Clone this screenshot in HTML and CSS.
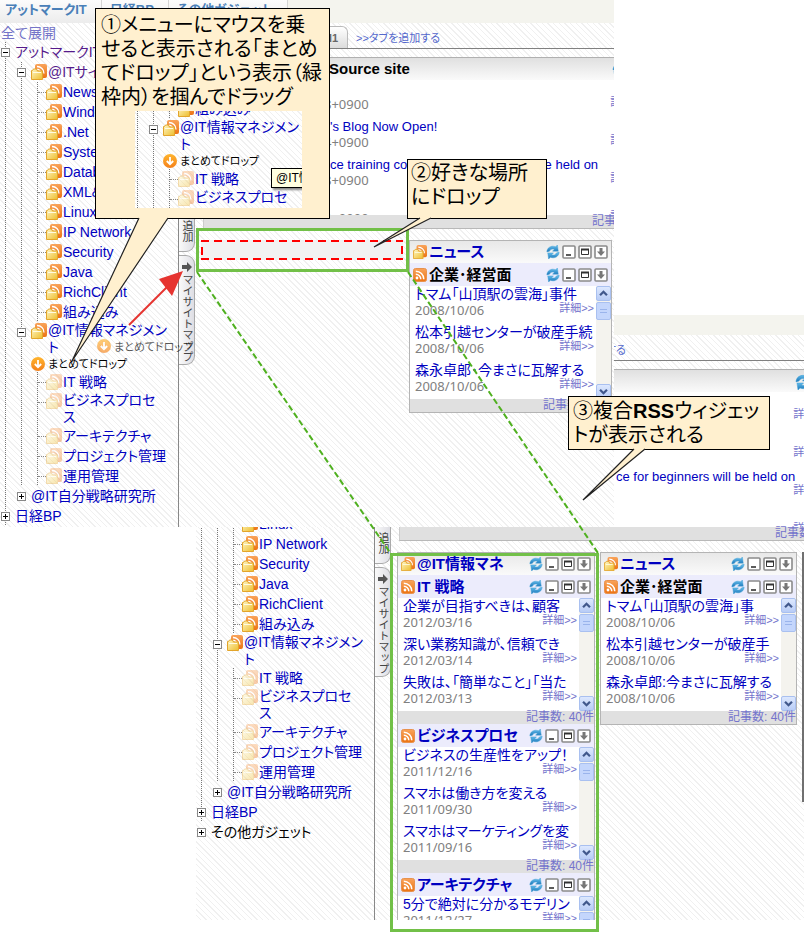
FILE: index.html
```html
<!DOCTYPE html>
<html lang="ja">
<head>
<meta charset="utf-8">
<meta name="viewport" content="width=device-width, initial-scale=1">
<title>まとめてドロップ</title>
<link rel="stylesheet" href="styles.css">
</head>
<body>
<svg class="defs" aria-hidden="true">
  <defs>
    <linearGradient id="orange" x1="0" y1="0" x2="0" y2="1"><stop offset="0" stop-color="#f9a35a"/><stop offset="1" stop-color="#ec7414"/></linearGradient>
    <linearGradient id="gold" x1="0" y1="0" x2="1" y2="1"><stop offset="0" stop-color="#fff6c4"/><stop offset="1" stop-color="#edbd2c"/></linearGradient>
    <linearGradient id="sun" x1="0" y1="0" x2="0" y2="1"><stop offset="0" stop-color="#ffb52e"/><stop offset="1" stop-color="#f4801a"/></linearGradient>
    <linearGradient id="blue" x1="0" y1="0" x2="0" y2="1"><stop offset="0" stop-color="#6cc4f0"/><stop offset="1" stop-color="#1874b8"/></linearGradient>
  </defs>
  <symbol id="folder" viewBox="0 0 16 16">
    <rect x="4" y="0" width="12" height="14" rx="2" fill="url(#orange)"/>
    <path d="M6 2.500c4 0 7 3 7 7M6 5.500c2.500 0 4 2 4 4" fill="none" stroke="#fff" stroke-width="1.300"/>
    <path d="M0.500 6.500h1l1-1.500h3l1 2h5v8.500h-11z" fill="url(#gold)" stroke="#e3a52b"/>
    <path d="M2 8.500h8" stroke="#fffbe2"/>
  </symbol>
  <symbol id="rss" viewBox="0 0 14 14">
    <rect x="0.500" y="0.500" width="13" height="13" rx="2" fill="url(#orange)" stroke="#e8924e"/>
    <circle cx="4" cy="10" r="1.400" fill="#fff"/>
    <path d="M2.800 6.200a5 5 0 0 1 5 5M2.800 3.200a8 8 0 0 1 8 8" fill="none" stroke="#fff" stroke-width="1.500"/>
  </symbol>
  <symbol id="refresh" viewBox="0 0 16 16">
    <path d="M1 8C1 3 6 0 11 2l2-2 1 7H7.500l2-2C7 4 5 5 4 7z" fill="url(#blue)" stroke="#3f9ed4" stroke-width=".5"/>
    <path d="M15 8c0 5-5 8-10 6l-2 2-1-7h6.500l-2 2c2.500 1 4.500 0 5.500-2z" fill="url(#blue)" stroke="#3f9ed4" stroke-width=".5"/>
  </symbol>
  <symbol id="min" viewBox="0 0 14 14"><rect x="1" y="1" width="12" height="12" rx="1" fill="#fff" stroke="#8a8a8a" stroke-width="1.600"/><path d="M4 10h5" stroke="#333" stroke-width="1.600"/></symbol>
  <symbol id="max" viewBox="0 0 14 14"><rect x="1" y="1" width="12" height="12" rx="1" fill="#fff" stroke="#8a8a8a" stroke-width="1.600"/><path d="M3.500 4.500v5h7v-5z" fill="none" stroke="#333"/><path d="M3 4.500h8" stroke="#333" stroke-width="2"/></symbol>
  <symbol id="down" viewBox="0 0 14 14"><rect x="1" y="1" width="12" height="12" rx="1" fill="#fff" stroke="#8a8a8a" stroke-width="1.600"/><path d="M5.500 3h3v3.500h2.500L7 11 3 6.500h2.500z" fill="#777"/></symbol>
  <symbol id="drop" viewBox="0 0 14 14"><circle cx="7" cy="7" r="7" fill="url(#sun)"/><path d="M7 3v7M3.800 7L7 10.200 10.200 7" fill="none" stroke="#fff" stroke-width="1.800"/></symbol>
  <symbol id="up" viewBox="0 0 15 15"><path d="M3.500 9.500l4-4 4 4" fill="none" stroke="#41588c" stroke-width="2.600"/></symbol>
  <symbol id="dn" viewBox="0 0 15 15"><path d="M3.500 5.500l4 4 4-4" fill="none" stroke="#41588c" stroke-width="2.600"/></symbol>
  <symbol id="arrow" viewBox="0 0 10 10"><path d="M0 3h5V0l5 5-5 5V7H0z" fill="#555"/></symbol>
  <symbol id="plus" viewBox="0 0 9 9"><rect x=".5" y=".5" width="8" height="8" fill="#fff" stroke="#888"/><path d="M2 4.500h5M4.500 2v5" stroke="#000"/></symbol>
  <symbol id="minus" viewBox="0 0 9 9"><rect x=".5" y=".5" width="8" height="8" fill="#fff" stroke="#888"/><path d="M2 4.500h5" stroke="#000"/></symbol>
</svg>

<main class="canvas">

  <section class="screen screen-after">
    <header class="topbar"></header>
    <div class="body">
      <nav class="side">
        <ul class="tree">
          <li class="l2"><svg><use href="#folder"/></svg><a href="#">Linux</a></li>
          <li class="l2"><svg><use href="#folder"/></svg><a href="#">IP Network</a></li>
          <li class="l2"><svg><use href="#folder"/></svg><a href="#">Security</a></li>
          <li class="l2"><svg><use href="#folder"/></svg><a href="#">Java</a></li>
          <li class="l2"><svg><use href="#folder"/></svg><a href="#">RichClient</a></li>
          <li class="l2 end"><svg><use href="#folder"/></svg><a href="#">組み込み</a></li>
          <li class="l1 two"><svg class="tog"><use href="#minus"/></svg><svg><use href="#folder"/></svg><a href="#">@IT情報マネジメン<br>ト</a></li>
          <li class="l2 dim"><svg><use href="#folder"/></svg><a href="#">IT 戦略</a></li>
          <li class="l2 dim two"><svg><use href="#folder"/></svg><a href="#">ビジネスプロセ<br>ス</a></li>
          <li class="l2 dim"><svg><use href="#folder"/></svg><a href="#">アーキテクチャ</a></li>
          <li class="l2 dim"><svg><use href="#folder"/></svg><a href="#">プロジェクト管理</a></li>
          <li class="l2 dim end"><svg><use href="#folder"/></svg><a href="#">運用管理</a></li>
          <li class="l1 end"><svg class="tog"><use href="#plus"/></svg><a href="#">@IT自分戦略研究所</a></li>
          <li class="l0"><svg class="tog"><use href="#plus"/></svg><a href="#">日経BP</a></li>
          <li class="l0 end"><svg class="tog"><use href="#plus"/></svg><span>その他ガジェット</span></li>
        </ul>
      </nav>
      <div class="rail"><button class="add">追加</button><button><svg><use href="#arrow"/></svg>マイサイトマップ</button></div>
      <div class="work">
        <div class="tabs"><a class="addtab" href="#">する</a></div>
        <article class="wide">
          <header><svg><use href="#refresh"/></svg></header>
          <div class="feed">
            <div class="item"><p></p><a href="#">詳細&gt;&gt;</a></div>
            <div class="item"><p></p><a href="#">詳細&gt;&gt;</a></div>
            <div class="item"><h4><a href="#">ce for beginners will be held on</a></h4><p></p><a href="#">詳細&gt;&gt;</a></div>
            <div class="item"><p></p><a href="#">詳細&gt;&gt;</a></div>
          </div>
          <footer>記事数: 40件</footer>
        </article>
        <div class="cols">
          <article class="widget">
            <header><svg><use href="#folder"/></svg><h3><a href="#">@IT情報マネ</a></h3><span class="ctl"><button><svg><use href="#refresh"/></svg></button><button><svg><use href="#min"/></svg></button><button><svg><use href="#max"/></svg></button><button><svg><use href="#down"/></svg></button></span></header>
            <header class="sub"><svg><use href="#rss"/></svg><h3><a href="#">IT 戦略</a></h3><span class="ctl"><button><svg><use href="#refresh"/></svg></button><button><svg><use href="#min"/></svg></button><button><svg><use href="#max"/></svg></button><button><svg><use href="#down"/></svg></button></span></header>
            <div class="view"><div class="feed">
              <div class="item"><h4><a href="#">企業が目指すべきは、顧客</a></h4><p>2012/03/16</p><a href="#">詳細&gt;&gt;</a></div>
              <div class="item"><h4><a href="#">深い業務知識が、信頼でき</a></h4><p>2012/03/14</p><a href="#">詳細&gt;&gt;</a></div>
              <div class="item"><h4><a href="#">失敗は、「簡単なこと」「当た</a></h4><p>2012/03/13</p><a href="#">詳細&gt;&gt;</a></div>
            </div><div class="bar"><button><svg><use href="#up"/></svg></button><i></i><button><svg><use href="#dn"/></svg></button></div></div>
            <footer>記事数: 40件</footer>
            <header class="sub"><svg><use href="#rss"/></svg><h3><a href="#">ビジネスプロセ</a></h3><span class="ctl"><button><svg><use href="#refresh"/></svg></button><button><svg><use href="#min"/></svg></button><button><svg><use href="#max"/></svg></button><button><svg><use href="#down"/></svg></button></span></header>
            <div class="view"><div class="feed">
              <div class="item"><h4><a href="#">ビジネスの生産性をアップ！</a></h4><p>2011/12/16</p><a href="#">詳細&gt;&gt;</a></div>
              <div class="item"><h4><a href="#">スマホは働き方を変える</a></h4><p>2011/09/30</p><a href="#">詳細&gt;&gt;</a></div>
              <div class="item"><h4><a href="#">スマホはマーケティングを変</a></h4><p>2011/09/16</p><a href="#">詳細&gt;&gt;</a></div>
            </div><div class="bar"><button><svg><use href="#up"/></svg></button><i></i><button><svg><use href="#dn"/></svg></button></div></div>
            <footer>記事数: 40件</footer>
            <header class="sub"><svg><use href="#rss"/></svg><h3><a href="#">アーキテクチャ</a></h3><span class="ctl"><button><svg><use href="#refresh"/></svg></button><button><svg><use href="#min"/></svg></button><button><svg><use href="#max"/></svg></button><button><svg><use href="#down"/></svg></button></span></header>
            <div class="view"><div class="feed">
              <div class="item"><h4><a href="#">5分で絶対に分かるモデリン</a></h4><p>2011/12/27</p><a href="#">詳細&gt;&gt;</a></div>
            </div><div class="bar"><button><svg><use href="#up"/></svg></button><i></i></div></div>
          </article>
          <article class="widget">
            <header><svg><use href="#folder"/></svg><h3><a href="#">ニュース</a></h3><span class="ctl"><button><svg><use href="#refresh"/></svg></button><button><svg><use href="#min"/></svg></button><button><svg><use href="#max"/></svg></button><button><svg><use href="#down"/></svg></button></span></header>
            <header class="sub"><svg><use href="#rss"/></svg><h3>企業･経営面</h3><span class="ctl"><button><svg><use href="#refresh"/></svg></button><button><svg><use href="#min"/></svg></button><button><svg><use href="#max"/></svg></button><button><svg><use href="#down"/></svg></button></span></header>
            <div class="view"><div class="feed">
              <div class="item"><h4><a href="#">トマム「山頂駅の雲海」事</a></h4><p>2008/10/06</p><a href="#">詳細&gt;&gt;</a></div>
              <div class="item"><h4><a href="#">松本引越センターが破産手</a></h4><p>2008/10/06</p><a href="#">詳細&gt;&gt;</a></div>
              <div class="item"><h4><a href="#">森永卓郎:今まさに瓦解する</a></h4><p>2008/10/06</p><a href="#">詳細&gt;&gt;</a></div>
            </div><div class="bar"><button><svg><use href="#up"/></svg></button><i></i><button><svg><use href="#dn"/></svg></button></div></div>
            <footer>記事数: 40件</footer>
          </article>
          <div class="edge"></div>
        </div>
      </div>
    </div>
  </section>

  <section class="screen screen-before">
    <header class="topbar"><a href="#">アットマークIT</a><a href="#">日経BP</a><a href="#">その他ガジェット</a></header>
    <div class="body">
      <nav class="side">
        <a class="expand" href="#">全て展開</a>
        <ul class="tree">
          <li class="l0"><svg class="tog"><use href="#minus"/></svg><a class="seen" href="#">アットマークIT</a></li>
          <li class="l1"><svg class="tog"><use href="#minus"/></svg><svg><use href="#folder"/></svg><a class="seen" href="#">@ITサイト</a></li>
          <li class="l2"><svg><use href="#folder"/></svg><a href="#">News</a></li>
          <li class="l2"><svg><use href="#folder"/></svg><a href="#">Windows</a></li>
          <li class="l2"><svg><use href="#folder"/></svg><a href="#">.Net</a></li>
          <li class="l2"><svg><use href="#folder"/></svg><a href="#">System</a></li>
          <li class="l2"><svg><use href="#folder"/></svg><a href="#">Database</a></li>
          <li class="l2"><svg><use href="#folder"/></svg><a href="#">XML&amp;</a></li>
          <li class="l2"><svg><use href="#folder"/></svg><a href="#">Linux</a></li>
          <li class="l2"><svg><use href="#folder"/></svg><a href="#">IP Network</a></li>
          <li class="l2"><svg><use href="#folder"/></svg><a href="#">Security</a></li>
          <li class="l2"><svg><use href="#folder"/></svg><a href="#">Java</a></li>
          <li class="l2"><svg><use href="#folder"/></svg><a href="#">RichClient</a></li>
          <li class="l2 end"><svg><use href="#folder"/></svg><a href="#">組み込み</a></li>
          <li class="l1 two"><svg class="tog"><use href="#minus"/></svg><svg><use href="#folder"/></svg><a href="#">@IT情報マネジメン<br>ト</a></li>
          <li class="l1 grab"><svg><use href="#drop"/></svg>まとめてドロップ</li>
          <li class="l2 dim"><svg><use href="#folder"/></svg><a href="#">IT 戦略</a></li>
          <li class="l2 dim two"><svg><use href="#folder"/></svg><a href="#">ビジネスプロセ<br>ス</a></li>
          <li class="l2 dim"><svg><use href="#folder"/></svg><a href="#">アーキテクチャ</a></li>
          <li class="l2 dim"><svg><use href="#folder"/></svg><a href="#">プロジェクト管理</a></li>
          <li class="l2 dim end"><svg><use href="#folder"/></svg><a href="#">運用管理</a></li>
          <li class="l1 end"><svg class="tog"><use href="#plus"/></svg><a href="#">@IT自分戦略研究所</a></li>
          <li class="l0"><svg class="tog"><use href="#plus"/></svg><a href="#">日経BP</a></li>
        </ul>
      </nav>
      <div class="rail"><button class="add">追加</button><button><svg><use href="#arrow"/></svg>マイサイトマップ</button></div>
      <div class="work">
        <div class="tabs"><button class="tab">d1</button><a class="addtab" href="#">&gt;&gt;タブを追加する</a></div>
        <article class="wide">
          <header><h3>Source site</h3><svg><use href="#refresh"/></svg></header>
          <div class="feed">
            <div class="item"><p>8+0900</p><a href="#">詳細&gt;&gt;</a></div>
            <div class="item"><h4><a href="#">'s Blog Now Open!</a></h4><p>4+0900</p><a href="#">詳細&gt;&gt;</a></div>
            <div class="item"><h4><a href="#">ce training course for beginners will be held on</a></h4><p>8+0900</p><a href="#">詳細&gt;&gt;</a></div>
            <div class="item"><p>8+0900</p><a href="#">詳細&gt;&gt;</a></div>
          </div>
          <footer>記事数: 40件</footer>
        </article>
        <div class="cols">
          <svg class="slot"><rect width="100%" height="100%"/></svg>
          <article class="widget">
            <header><svg><use href="#folder"/></svg><h3><a href="#">ニュース</a></h3><span class="ctl"><button><svg><use href="#refresh"/></svg></button><button><svg><use href="#min"/></svg></button><button><svg><use href="#max"/></svg></button><button><svg><use href="#down"/></svg></button></span></header>
            <header class="sub"><svg><use href="#rss"/></svg><h3>企業･経営面</h3><span class="ctl"><button><svg><use href="#refresh"/></svg></button><button><svg><use href="#min"/></svg></button><button><svg><use href="#max"/></svg></button><button><svg><use href="#down"/></svg></button></span></header>
            <div class="view"><div class="feed">
              <div class="item"><h4><a href="#">トマム「山頂駅の雲海」事件</a></h4><p>2008/10/06</p><a href="#">詳細&gt;&gt;</a></div>
              <div class="item"><h4><a href="#">松本引越センターが破産手続</a></h4><p>2008/10/06</p><a href="#">詳細&gt;&gt;</a></div>
              <div class="item"><h4><a href="#">森永卓郎･今まさに瓦解する</a></h4><p>2008/10/06</p><a href="#">詳細&gt;&gt;</a></div>
            </div><div class="bar"><button><svg><use href="#up"/></svg></button><i></i><button><svg><use href="#dn"/></svg></button></div></div>
            <footer>記事数: 40件</footer>
          </article>
        </div>
      </div>
    </div>
  </section>

  <div class="ghost"><svg><use href="#drop"/></svg>まとめてドロップ</div>
  <div class="frame frame-slot"></div>
  <div class="frame frame-result"></div>

  <div class="callout callout-1">
    <p>①メニューにマウスを乗<br>せると表示される「まとめ<br>てドロップ」という表示（緑<br>枠内）を掴んでドラッグ</p>
    <div class="inset">
      <ul class="tree">
        <li class="l2 end"><svg><use href="#folder"/></svg><a href="#">組み込み</a></li>
        <li class="l1 two"><svg class="tog"><use href="#minus"/></svg><svg><use href="#folder"/></svg><a href="#">@IT情報マネジメン<br>ト</a></li>
        <li class="l1 grab"><svg><use href="#drop"/></svg>まとめてドロップ</li>
        <li class="l2 dim"><svg><use href="#folder"/></svg><a href="#">IT 戦略</a></li>
        <li class="l2 dim two"><svg><use href="#folder"/></svg><a href="#">ビジネスプロセ</a></li>
      </ul>
      <span class="tip">@IT情</span>
    </div>
  </div>
  <div class="callout callout-2"><p>②好きな場所<br>にドロップ</p></div>
  <div class="callout callout-3"><p>③複合<b>RSS</b>ウィジェッ<br>トが表示される</p></div>

  <svg class="marks" width="804" height="932" viewBox="0 0 804 932" aria-hidden="true">
    <g fill="none" stroke="#4fb01f" stroke-width="2" stroke-dasharray="6 3"><path d="M197 272L391 554"/><path d="M408 272L598 553"/></g>
    <g fill="#fff0cf" stroke="#222" stroke-width="1.200">
      <path d="M139 218L72 361L168 218"/>
      <path d="M420 218L374 247L431 218"/>
      <path d="M634 449L583 500L645 449"/>
    </g>
    <path d="M129 325L170 284" stroke="#e63430" stroke-width="2"/>
    <path d="M183 271L159 279L172 296z" fill="#e63430"/>
  </svg>
</main>
</body>
</html>
```

FILE: styles.css
```css
* { box-sizing: border-box; }

body {
  margin: 0;
  background: #fff;
  color: #000;
  font: 14px/18px "Liberation Sans", "Noto Sans CJK JP", sans-serif;
  font-feature-settings: "palt";
}

h3, h4, p, ul { margin: 0; padding: 0; font-size: inherit; font-weight: normal; }
li { list-style: none; }
a { color: #0000c0; text-decoration: none; }
svg { display: block; flex: none; }
button { margin: 0; padding: 0; border: 0; background: none; font: inherit; color: inherit; }
.defs { position: absolute; width: 0; height: 0; }

.canvas { position: relative; min-height: 932px; overflow: hidden; }

/* Screens laid over each other on the canvas */
.screen {
  position: absolute;
  display: flex;
  flex-direction: column;
  overflow: hidden;
  white-space: nowrap;
}
.screen, .inset { background: repeating-linear-gradient(45deg, #fff 0 3px, #f0f0f0 3px 4px); }
.screen-before { left: 0; top: 0; width: 614px; height: 527px; }
.screen-after { left: 196px; right: 0; top: 315px; height: 605px; }

.topbar { display: flex; flex: none; height: 23px; background: #f4f4ee; }
.screen-after .topbar { height: 20px; }
.topbar a {
  padding: 0 14px 0 8px;
  border-right: 1px solid #d5d5d5;
  background: linear-gradient(#fcfcfc, #ececec);
  color: #4a80b8;
  font-size: 13px;
  font-weight: bold;
  line-height: 20px;
}
.topbar a:first-child { padding-left: 5px; }

.body { display: flex; flex: 1; min-height: 0; }
.side { flex: none; width: 179px; border-right: 1px solid #888; }
.screen-after .side { padding-top: 179px; }
.expand { display: block; height: 19px; padding-left: 1px; color: #7474c8; line-height: 20px; }

/* Site map tree */
.tree li {
  --dots: linear-gradient(#777 50%, transparent 50%);
  display: flex;
  align-items: flex-start;
  height: 20px;
  line-height: 20px;
  background-repeat: repeat-y;
}
.tree li.l0 {
  padding-left: 1px;
  background-image: var(--dots);
  background-size: 1px 2px;
  background-position: 5px 0;
}
.tree li.l1 {
  padding-left: 17px;
  background-image: var(--dots), var(--dots);
  background-size: 1px 2px;
  background-position: 5px 0, 21px 0;
}
.tree li.l2 {
  padding-left: 38px;
  background-image: var(--dots), var(--dots), var(--dots);
  background-size: 1px 2px;
  background-position: 5px 0, 21px 0, 37px 0;
}
.tree li.l0.end { background: none; }
.tree li.l1.end { background-image: var(--dots); }
.tree li.l2::before { content: ""; width: 8px; margin-top: 10px; border-top: 1px dotted #888; }
.tree svg { width: 16px; height: 16px; margin: 2px 1px 0 0; }
.tree .tog { width: 9px; height: 9px; margin: 6px 5px 0 0; }
.tree .dim svg { opacity: .38; }
.tree li.two { height: 34px; line-height: 17px; }
.tree li.two svg { margin-top: 1px; }
.tree li.two .tog { margin-top: 6px; }
.tree li.grab { height: 16px; padding-left: 31px; font-size: 11px; line-height: 17px; }
.tree .grab svg { width: 14px; height: 14px; margin: 1px 3px 0 0; }
.tree .seen { color: #551a8b; }

/* Vertical tabs beside the tree */
.rail { display: flex; flex: none; flex-direction: column; gap: 3px; width: 17px; padding-top: 172px; }
.rail button {
  display: flex;
  align-items: center;
  width: 16px;
  padding: 6px 0;
  border: 1px solid #aaa;
  border-left: 0;
  border-radius: 0 9px 9px 0;
  background: linear-gradient(90deg, #fafafa, #dedee4);
  color: #444;
  font-size: 11px;
  line-height: 15px;
  writing-mode: vertical-rl;
}
.rail .add { height: 57px; padding-top: 24px; }
.rail button:not(.add) { height: 110px; }
.rail svg { width: 10px; height: 10px; margin-bottom: 2px; }

.work { flex: 1; min-width: 0; }
.tabs { display: flex; height: 26px; border-bottom: 1px solid #808080; }
.tab {
  width: 152px;
  margin-top: 3px;
  padding-right: 9px;
  border: 1px solid #bbb;
  border-bottom: 0;
  border-radius: 0 6px 0 0;
  background: linear-gradient(#fff, #dcdcdc);
  color: #666;
  font-size: 11px;
  font-weight: bold;
  text-align: right;
}
.addtab { padding-left: 8px; color: #5468cc; font-size: 11px; line-height: 30px; }
.screen-after .addtab { padding-left: 214px; }

/* Full width feed */
.wide { margin: 8px -65px 11px 7px; border-bottom: 1px solid #b8b8b8; border-left: 1px solid #ccc; background: #fff; }
.screen-after .wide { margin-right: -58px; }
.wide header {
  display: flex;
  justify-content: space-between;
  height: 23px;
  padding: 0 51px 0 125px;
  border-top: 1px solid #b0b0b0;
  background: linear-gradient(#e0e0e0, #fafafa);
}
.screen-after .wide header { justify-content: flex-end; }
.wide h3 { font-size: 15px; font-weight: bold; line-height: 22px; }
.wide header svg { width: 16px; height: 16px; margin-top: 4px; }
.wide .feed { height: 135px; padding: 0 34px 0 120px; overflow: hidden; }
.wide h4 { padding-left: 6px; font-size: 13px; }
.screen-after .wide h4 { padding-left: 96px; }
.wide footer { padding-right: 19px; }

.feed { flex: 1; min-width: 0; overflow: hidden; }
.item {
  display: grid;
  grid-template: 17px 14px / 1fr auto;
  height: 38px;
}
.item h4 { grid-column: 1 / 3; grid-row: 1; overflow: hidden; line-height: 17px; }
.item p { grid-row: 2; color: #808080; font-family: "Noto Sans", sans-serif; font-size: 13px; line-height: 14px; }
.item > a { grid-column: 2; grid-row: 2; color: #7474cc; font-size: 11px; line-height: 11px; }

footer {
  height: 13px;
  background: #e0e0e0;
  color: #7474cc;
  font-size: 12px;
  line-height: 13px;
  text-align: right;
}

/* Widget columns */
.cols { display: grid; grid-template-columns: 202px 203px; align-items: start; column-gap: 6px; padding-left: 5px; }
.screen-after .cols { grid-template-columns: 198px 197px 1fr; column-gap: 5px; }
.slot { width: 100%; height: 20px; }
.slot rect { fill: #f2f2f2; stroke: #f00; stroke-width: 4px; stroke-dasharray: 8px 5px; }
.widget { border: 1px solid #b4b4b4; background: #fff; }
.widget header {
  display: flex;
  align-items: center;
  gap: 2px;
  height: 22px;
  padding: 0 3px;
  background: linear-gradient(#e8e8e8, #fafafa);
}
.widget header.sub { height: 23px; background: #ececfc; }
.widget header > svg { width: 14px; height: 14px; }
.widget h3 { flex: 1; min-width: 0; overflow: hidden; font-size: 15px; font-weight: bold; line-height: 22px; }
.ctl { display: flex; gap: 2px; }
.ctl svg { width: 14px; height: 14px; }
.view { display: flex; height: 113px; overflow: hidden; }
.view .feed { padding: 0 2px 0 5px; }
.bar { display: flex; flex: none; flex-direction: column; width: 15px; background: #f4f3ee; }
.bar button, .bar i { height: 15px; border: 1px solid #a9c0f0; border-radius: 2px; background: linear-gradient(#dde8fe, #b8ccf6); }
.bar svg { width: 13px; height: 13px; }
.bar i { height: 18px; margin-top: 1px; background: repeating-linear-gradient(#c4d6fc 0 2px, #9ab4ec 2px 3px) content-box, #c4d6fc; padding: 4px 3px; }
.bar button:last-child { margin-top: auto; }
.edge { height: 250px; border-left: 2px solid #707070; background: #eee; }

/* Annotations over the screens */
.frame { position: absolute; border: 3px solid #72c048; }
.frame-slot { left: 196px; top: 228px; width: 213px; height: 44px; }
.frame-result { left: 390px; top: 553px; width: 209px; height: 379px; }
.marks { position: absolute; left: 0; top: 0; }
.ghost {
  position: absolute;
  left: 97px;
  top: 339px;
  display: flex;
  gap: 3px;
  font-size: 11px;
  line-height: 17px;
  opacity: .65;
}
.ghost svg { width: 14px; height: 14px; }

.callout {
  position: absolute;
  padding: 4px 5px;
  border: 1px solid #000;
  background: #fff0cf;
  font-size: 20px;
  line-height: 24px;
  white-space: nowrap;
}
.callout-1 { left: 95px; top: 8px; width: 235px; height: 211px; }
.callout-2 { left: 407px; top: 159px; width: 140px; height: 60px; padding: 1px 3px; }
.callout-3 { left: 568px; top: 396px; width: 202px; height: 54px; padding: 2px 4px; }

.inset {
  position: relative;
  width: 167px;
  height: 97px;
  margin: 2px 0 0 34px;
  overflow: hidden;
  font-size: 14px;
}
.inset .tree { margin: -12px 0 0 -3px; }
.tip {
  position: absolute;
  left: 136px;
  top: 57px;
  width: 40px;
  padding-left: 4px;
  border: 1px solid #000;
  background: #ffffe1;
  box-shadow: 2px 2px 2px #888;
  font-size: 12px;
  line-height: 18px;
}
```
